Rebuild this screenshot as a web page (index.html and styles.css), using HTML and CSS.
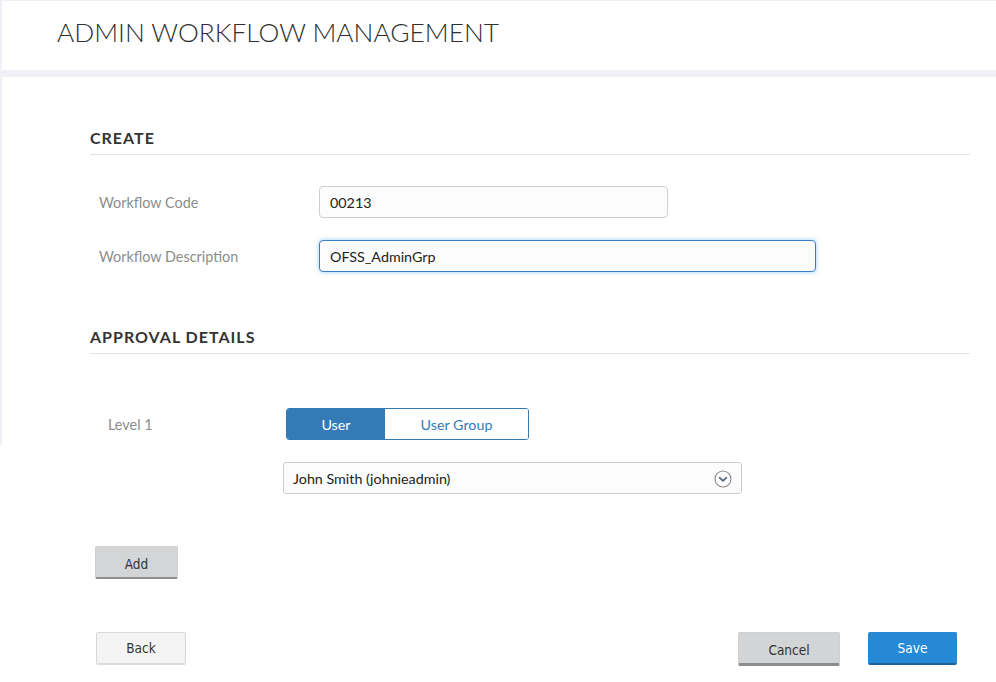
FILE: index.html
```html
<!DOCTYPE html>
<html lang="en">
<head>
<meta charset="utf-8">
<title>Admin Workflow Management</title>
<link rel="stylesheet" href="styles.css">
</head>
<body>
<div class="page">
  <header class="header">
    <h1 class="title">ADMIN WORKFLOW MANAGEMENT</h1>
  </header>
  <main class="main">
    <section class="section create">
      <h2 class="section-title">CREATE</h2>
      <div class="form">
        <div class="form-row">
          <label class="label">Workflow Code</label>
          <div class="input input-short">00213</div>
        </div>
        <div class="form-row">
          <label class="label">Workflow Description</label>
          <div class="input input-long focused">OFSS_AdminGrp</div>
        </div>
      </div>
    </section>
    <section class="section approval">
      <h2 class="section-title">APPROVAL DETAILS</h2>
      <div class="level-row">
        <span class="label level-label">Level 1</span>
        <div class="toggle">
          <span class="toggle-item active">User</span>
          <span class="toggle-item">User Group</span>
        </div>
      </div>
      <div class="select-row">
        <div class="select">
          <span>John Smith (johnieadmin)</span>
          <svg class="chevron" width="18" height="18" viewBox="0 0 18 18">
            <circle cx="9" cy="9" r="8" fill="none" stroke="#8a8a8a" stroke-width="1.1"/>
            <path d="M5.6 7.6 L9 10.9 L12.4 7.6" fill="none" stroke="#5b6b80" stroke-width="1.8" stroke-linecap="round" stroke-linejoin="round"/>
          </svg>
        </div>
      </div>
      <div class="add-row">
        <button class="btn btn-add">Add</button>
      </div>
    </section>
    <div class="actions">
      <button class="btn btn-back">Back</button>
      <div class="actions-right">
        <button class="btn btn-cancel">Cancel</button>
        <button class="btn btn-save">Save</button>
      </div>
    </div>
  </main>
</div>
</body>
</html>
```
FILE: styles.css
```css
* { box-sizing: border-box; }
html, body { margin: 0; padding: 0; background: #ffffff; }
body { font-family: Lato, "Open Sans", sans-serif; color: #333; }

.page {
  background-color: #ffffff;
  background-image: linear-gradient(#f0f1f6, #f0f1f6);
  background-repeat: no-repeat;
  background-size: 100% 445px;
  background-position: top left;
  padding: 1px 0 0 2px;
}

.header {
  background: #ffffff;
  height: 69px;
  padding: 0 0 0 55px;
  display: flex;
  align-items: center;
  margin-bottom: 7px;
}
.title {
  margin: 0;
  font-family: Lato, sans-serif;
  font-weight: 300;
  font-size: 26.3px;
  letter-spacing: 0;
  color: #2f2f2f;
  line-height: 34px;
  padding-bottom: 8px;
}

.main {
  background: #ffffff;
  padding: 51px 26px 16px 88px;
}

.section-title {
  margin: 0;
  font-weight: 700;
  font-size: 16px;
  letter-spacing: 1px;
  line-height: 20px;
  color: #333;
  padding-bottom: 6px;
  border-bottom: 1px solid #e4e4e4;
}

.form { padding: 31px 0 0 9px; display: flex; flex-direction: column; gap: 22px; }
.form-row { display: flex; align-items: center; }
.label {
  font-size: 14.4px;
  color: #8c8c8c;
  width: 220px;
}
.input {
  height: 32px;
  border: 1px solid #cfcfcf;
  border-radius: 4px;
  background: #fcfcfc;
  font-size: 14.3px;
  color: #222;
  padding: 0 10px;
  display: flex;
  align-items: center;
}
.input-short { width: 349px; }
.input-long { width: 497px; }
.focused {
  border-color: #3b7cc4;
  box-shadow: 0 0 5px rgba(80, 160, 235, 0.55);
}

.approval { margin-top: 55px; }
.level-row { display: flex; align-items: center; padding: 54px 0 0 18px; }
.level-label { width: 178px; }
.toggle {
  display: flex;
  border: 1px solid #337ab7;
  border-radius: 3px;
  overflow: hidden;
  height: 32px;
}
.toggle-item {
  display: flex;
  align-items: center;
  justify-content: center;
  font-size: 14.3px;
  color: #337ab7;
  background: #fff;
  width: 143px;
}
.toggle-item.active {
  background: #337ab7;
  color: #fff;
  width: 98px;
}

.select-row { padding: 22px 0 0 193px; }
.select {
  width: 459px;
  height: 32px;
  border: 1px solid #cdcdcd;
  border-radius: 3px;
  background: #fcfcfc;
  font-size: 14.3px;
  color: #222;
  display: flex;
  align-items: center;
  justify-content: space-between;
  padding: 0 9px 0 9px;
}
.chevron { display: block; margin-top: 1px; }

.add-row { padding: 52px 0 0 5px; }

.btn {
  font-family: "DejaVu Sans Condensed", "Liberation Sans", sans-serif;
  font-size: 13.5px;
  height: 33px;
  border: 1px solid transparent;
  border-radius: 2px;
  color: #333;
  padding: 0;
  cursor: pointer;
}
.btn-add {
  width: 83px;
  background: #d4d5d7;
  border-color: #cfd0d2;
  border-bottom: 2px solid #8e8f91;
  padding-top: 3px;
}

.actions {
  display: flex;
  justify-content: space-between;
  align-items: flex-start;
  padding: 53px 13px 0 6px;
}
.actions-right { display: flex; gap: 28px; }
.btn-back {
  width: 90px;
  background: #f4f4f4;
  border-color: #d8d8d8;
  border-bottom: 2px solid #dcdcdc;
}
.btn-cancel {
  width: 102px;
  height: 34px;
  background: #d3d4d6;
  border-color: #cfd0d2;
  border-bottom: 3px solid #8c8d8f;
  padding-top: 4px;
}
.btn-save {
  width: 89px;
  background: #2589d6;
  border-color: #2589d6;
  border-bottom: 2px solid #1d5f96;
  color: #fff;
}
```
